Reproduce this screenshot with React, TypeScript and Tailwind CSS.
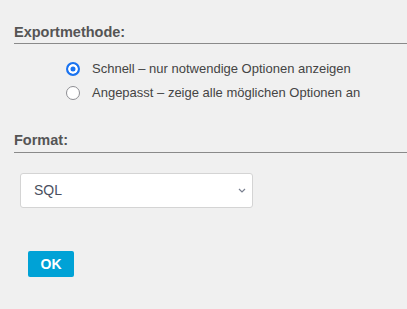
export default function App() {
  return (
    <div className="min-h-[309px] w-full bg-[#f0f0f0] pl-[14px] pt-[24px] font-['Liberation_Sans',sans-serif] text-[#444]">
      {/* Export method */}
      <h2 className="border-b border-[#8a8a8a] pb-[3px] text-[14.5px] font-bold leading-[16px] text-[#555]">
        Exportmethode:
      </h2>
      <div className="mt-[18px] flex flex-col gap-[10px] pl-[52px]">
        <label className="flex items-center gap-[12px] text-[13px] leading-[14px]">
          <input
            type="radio"
            name="method"
            defaultChecked
            className="m-0 h-[14px] w-[14px] appearance-none rounded-full border-[1.5px] border-[#8e8e93] bg-white checked:border-[2px] checked:border-[#1a73f0] checked:bg-[#1a73f0] checked:shadow-[inset_0_0_0_2.5px_white]"
          />
          <span>Schnell – nur notwendige Optionen anzeigen</span>
        </label>
        <label className="flex items-center gap-[12px] text-[13px] leading-[14px]">
          <input
            type="radio"
            name="method"
            className="m-0 h-[14px] w-[14px] appearance-none rounded-full border-[1.5px] border-[#8e8e93] bg-white checked:border-[2px] checked:border-[#1a73f0] checked:bg-[#1a73f0] checked:shadow-[inset_0_0_0_2.5px_white]"
          />
          <span>Angepasst – zeige alle möglichen Optionen an</span>
        </label>
      </div>

      {/* Format */}
      <h2 className="mt-[32px] border-b border-[#8a8a8a] pb-[4px] text-[14.5px] font-bold leading-[16px] text-[#555]">
        Format:
      </h2>
      <div className="mt-[20px] pl-[6px]">
        <div className="relative w-[233px]">
          <select className="h-[35px] w-full appearance-none rounded-[3px] border border-[#d4d4d4] bg-white pl-[13px] text-[14px] text-[#4a5060] outline-none">
            <option>SQL</option>
            <option>CSV</option>
            <option>JSON</option>
          </select>
          <svg className="pointer-events-none absolute right-[7px] top-[15px]" width="8" height="5" viewBox="0 0 8 5">
            <path d="M1 1l3 3 3-3" fill="none" stroke="#7a8090" strokeWidth="1.2" />
          </svg>
        </div>
      </div>

      <button className="mt-[43px] ml-[14px] h-[26px] w-[46px] rounded-[2px] bg-[#00a2d6] text-[14px] font-bold text-white">
        OK
      </button>
    </div>
  );
}
